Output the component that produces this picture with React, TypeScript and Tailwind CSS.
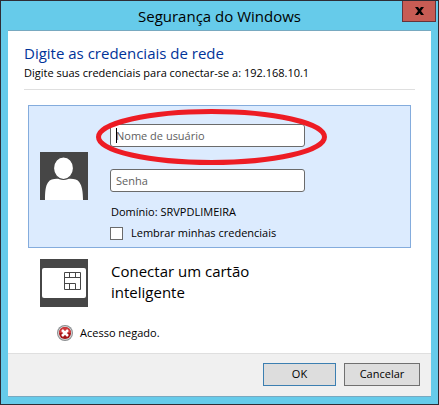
import React from 'react';

const UserTile: React.FC = () => (
    <svg className="size-12 shrink-0" viewBox="0 0 48 48" aria-hidden="true">
        <rect width="48" height="48" fill="#464646" />
        <path d="M5 48c0-8 .5-14 3-17.500C10 27.500 13 26.800 17 26.800h13.500c4 0 7 .7 9 3.700 2.500 3.500 3.500 9.500 3.500 17.500z" fill="#fff" />
        <ellipse cx="23.500" cy="16.200" rx="10" ry="11.300" fill="#fff" stroke="#464646" strokeWidth="1.200" />
    </svg>
);

const SmartCardTile: React.FC = () => (
    <svg className="size-12 shrink-0" viewBox="0 0 48 48" aria-hidden="true">
        <rect width="48" height="48" fill="#464646" />
        <rect x="2" y="9" width="44" height="30" rx="2" fill="#fff" />
        <path d="M24.500 13.500h16v17h-16zM24.500 18.500h16M29.500 13.500v5M35.500 13.500v5M24.500 24.500h11v6M29.500 24.500v6" fill="none" stroke="#464646" />
    </svg>
);

const ErrorIcon: React.FC = () => (
    <svg className="size-4 shrink-0" viewBox="0 0 16 16" aria-hidden="true">
        <circle cx="8" cy="8" r="8" fill="#8b8e90" />
        <circle cx="8" cy="8" r="7" fill="#d3d3d3" />
        <circle cx="8" cy="8" r="6" fill="#a51417" />
        <path d="M2 8a6 6 0 0 1 12 0z" fill="#cf3a3c" />
        <path d="M5 5l6 6M11 5l-6 6" stroke="#fff" strokeWidth="2.500" />
    </svg>
);

const inputClass =
    'block h-[23px] w-full rounded-[3px] border border-[#6b6b6b] bg-white px-[5px] text-[11px] text-black outline-none placeholder:text-[#606060]';

const App: React.FC = () => {
    return (
        <div className="flex min-h-screen flex-col border border-[#2e2c35] bg-[#66cbea] px-[7px] pb-[7px] font-['Open_Sans','Noto_Sans',sans-serif] text-[11px] text-black">
            <header className="grid h-[29px] grid-cols-[1fr_auto_1fr] items-center">
                <h1 className="col-start-2 text-[15px] leading-7">Segurança do Windows</h1>
                <button
                    type="button"
                    aria-label="Fechar"
                    className="-mr-[5px] flex h-[21px] w-[34px] items-center justify-center self-start justify-self-end border border-t-0 border-[#66333a] bg-[#c75c54]"
                >
                    <svg className="h-2 w-[9px]" viewBox="0 0 9 8" aria-hidden="true">
                        <path d="M0 0h3l1.500 2L6 0h3L6 4l3 4H6L4.500 6 3 8H0l3-4z" fill="#000" />
                    </svg>
                </button>
            </header>

            <form className="flex flex-1 flex-col border-t border-b border-[#78a9c0] bg-white">
                <div className="mx-4 h-[59px] border-b border-[#dfdfdf] pt-[10px]">
                    <h2 className="text-[15px] leading-6 text-[#003399]">Digite as credenciais de rede</h2>
                    <p className="leading-4">Digite suas credenciais para conectar-se a: 192.168.10.1</p>
                </div>

                <section className="mx-5 mt-[15px] flex gap-[22px] border border-[#84acdd] bg-[#dcebfe] pt-[18px] pb-[6px] pl-[11px]">
                    <div className="pt-7">
                        <UserTile />
                    </div>
                    <div className="w-[195px]">
                        <div className="relative">
                            <input type="text" aria-label="Nome de usuário" placeholder="Nome de usuário" className={inputClass} />
                            <span className="absolute top-1 left-[6px] h-[15px] w-px bg-black" />
                            <svg
                                className="pointer-events-none absolute -top-[15px] -left-[14px] h-14 w-[231px]"
                                viewBox="0 0 231 56"
                                aria-hidden="true"
                            >
                                <ellipse cx="115.500" cy="28" rx="113" ry="25.500" fill="none" stroke="#ed1c24" strokeWidth="5" />
                            </svg>
                        </div>
                        <input type="password" aria-label="Senha" placeholder="Senha" className={`mt-[22px] ${inputClass}`} />
                        <p className="mt-3 ml-px leading-4">Domínio: SRVPDLIMEIRA</p>
                        <label className="mt-[5px] flex h-4 items-center gap-2 whitespace-nowrap">
                            <input type="checkbox" className="size-[13px] appearance-none border border-[#6b6b6b] bg-white" />
                            Lembrar minhas credenciais
                        </label>
                    </div>
                </section>

                <section className="mt-[11px] ml-8 flex gap-[23px]">
                    <SmartCardTile />
                    <p className="w-40 pt-[2px] text-[15px] leading-[21px]">Conectar um cartão inteligente</p>
                </section>

                <p className="mt-[18px] ml-[49px] flex items-center gap-[7px] leading-4" role="alert">
                    <ErrorIcon />
                    Acesso negado.
                </p>

                <footer className="mt-auto flex h-[43px] justify-end gap-2 border-t border-[#dfdfdf] bg-[#f0f0f0] pt-[9px] pr-[11px]">
                    <button type="submit" className="h-[23px] w-[73px] border border-[#3c7fb1] bg-[#dddddd]">OK</button>
                    <button type="button" className="h-[23px] w-[76px] border border-[#707070] bg-[#dddddd]">Cancelar</button>
                </footer>
            </form>
        </div>
    );
};

export default App;
